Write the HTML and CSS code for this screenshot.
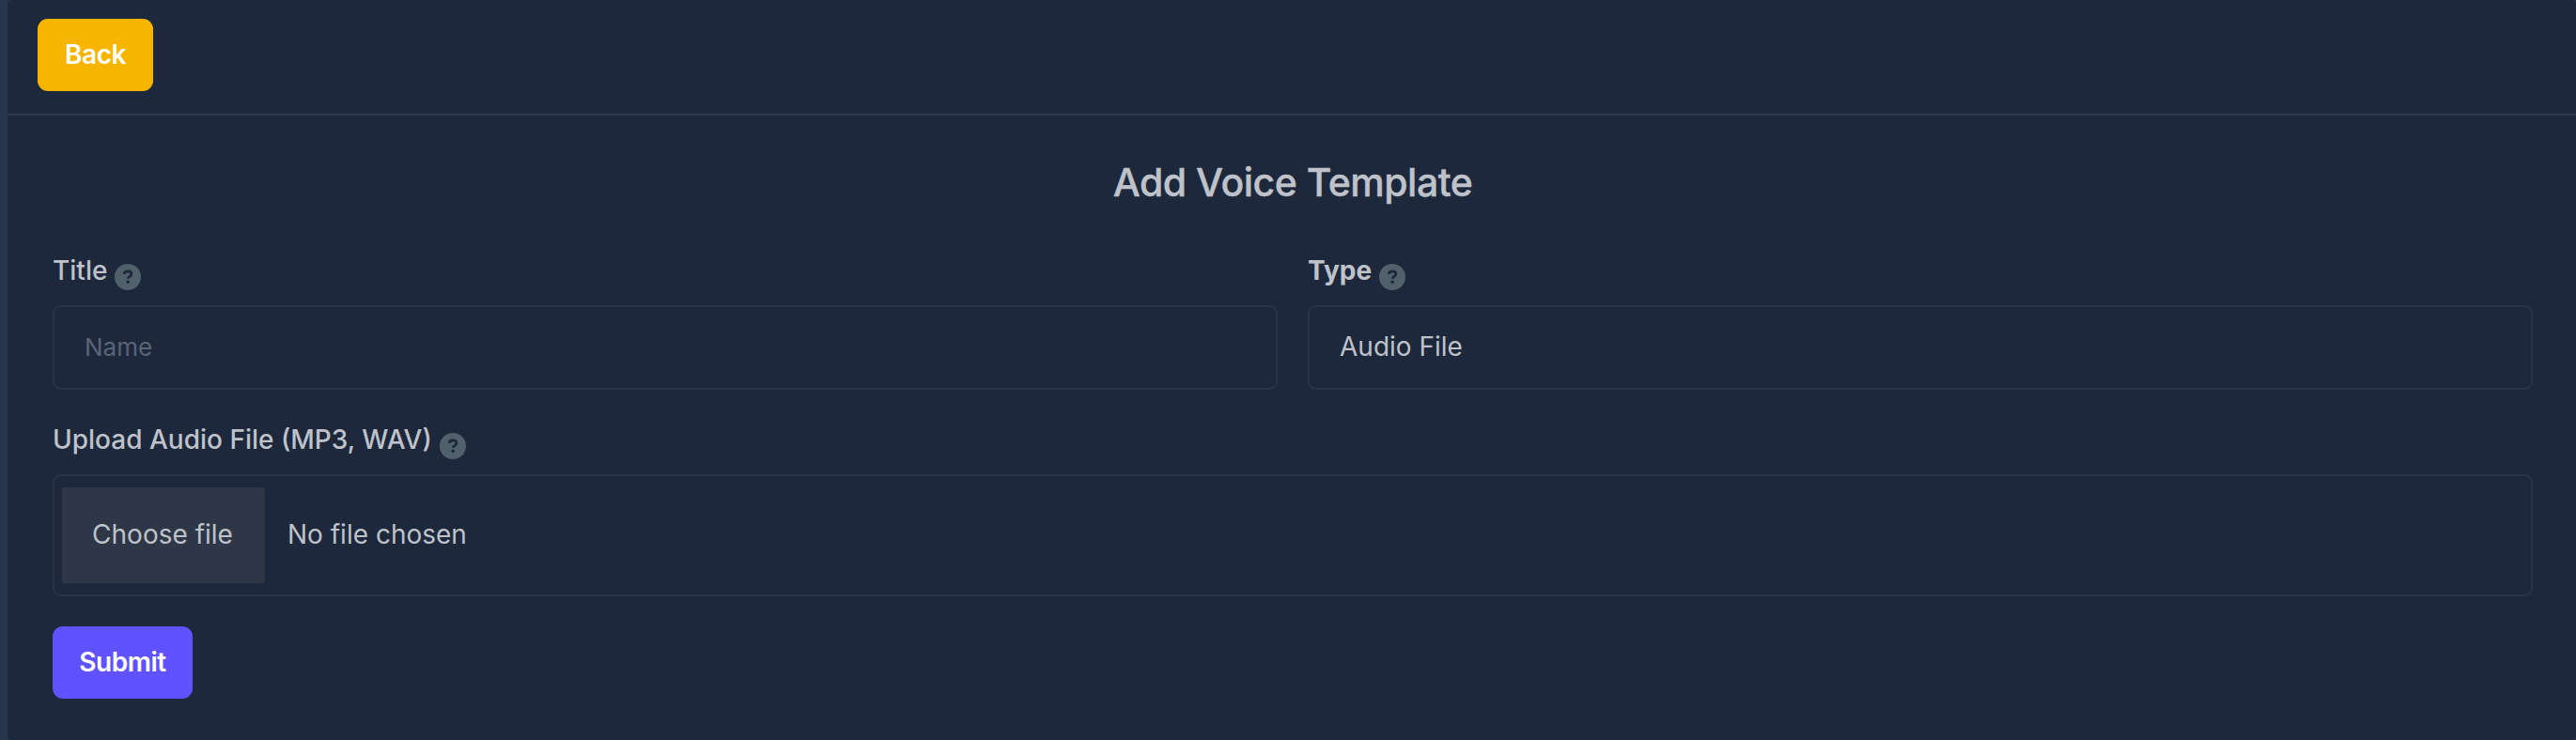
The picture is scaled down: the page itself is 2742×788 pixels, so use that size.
FILE: index.html
```html
<!DOCTYPE html>
<html lang="en">
<head>
    <meta charset="UTF-8">
    <meta name="viewport" content="width=device-width, initial-scale=1.0">
    <title>Add Voice Template</title>
    <link rel="stylesheet" href="styles.css">
</head>
<body>

<div class="card">
    <div class="card-header">
        <button type="button" class="btn btn-warning">Back</button>
    </div>

    <form class="card-body">
        <h2>Add Voice Template</h2>

        <div class="row">
            <div class="field">
                <label for="title">Title
                    <svg class="help" viewBox="0 0 28 28"><circle cx="14" cy="14" r="14"/><path d="M10.2 10.8C10.4 8.8 12 7.8 14 7.8c2.300 0 3.900 1.100 3.900 2.900 0 2.700-3.600 2.500-3.600 5.100"/><circle class="dot" cx="14.200" cy="19.200" r="1.800"/></svg>
                </label>
                <input type="text" id="title" class="form-control" placeholder="Name">
            </div>
            <div class="field">
                <label for="type" class="bold">Type
                    <svg class="help" viewBox="0 0 28 28"><circle cx="14" cy="14" r="14"/><path d="M10.2 10.8C10.4 8.8 12 7.8 14 7.8c2.300 0 3.900 1.100 3.900 2.900 0 2.700-3.600 2.500-3.600 5.100"/><circle class="dot" cx="14.200" cy="19.200" r="1.800"/></svg>
                </label>
                <select id="type" class="form-control">
                    <option>Audio File</option>
                </select>
            </div>
        </div>

        <!-- Audio upload -->
        <div class="field">
            <label>Upload Audio File (MP3, WAV)
                <svg class="help" viewBox="0 0 28 28"><circle cx="14" cy="14" r="14"/><path d="M10.2 10.8C10.4 8.8 12 7.8 14 7.8c2.300 0 3.900 1.100 3.900 2.900 0 2.700-3.600 2.500-3.600 5.100"/><circle class="dot" cx="14.200" cy="19.200" r="1.800"/></svg>
            </label>
            <div class="form-control file-control">
                <button type="button" class="file-button">Choose file</button>
                <span>No file chosen</span>
            </div>
        </div>

        <button type="button" class="btn btn-primary">Submit</button>
    </form>
</div>

</body>
</html>
```

FILE: styles.css
```css
* {
    box-sizing: border-box;
}
body {
    margin: 0;
    padding-left: 8px;
    background-color: #29354c;
    color: #bfc2c9;
    font-family: Inter, sans-serif;
    font-size: 28px;
}
.card {
    height: 788px;
    background-color: #1d283d;
    border-radius: 4px;
}
.card-header {
    height: 123px;
    padding: 20px 32px;
    border-bottom: 2px solid #2f3b4d;
}
.card-body {
    padding: 47px 46px 0 48px;
}
h2 {
    margin: 0 0 48px;
    font-size: 41px;
    line-height: 48px;
    font-weight: 500;
    letter-spacing: -0.5px;
    -webkit-text-stroke: 0.4px #bfc2c9;
    text-align: center;
}
.btn {
    height: 77px;
    padding: 0 0 2px;
    border: none;
    border-radius: 11px;
    color: #fff;
    font-family: inherit;
    font-size: 28px;
    font-weight: 600;
    letter-spacing: -0.5px;
}
.btn-warning {
    width: 123px;
    background-color: #f7b500;
}
.btn-primary {
    width: 149px;
    background-color: #6152ff;
}
.row {
    display: grid;
    grid-template-columns: 1fr 1fr;
    gap: 32px;
}
.field {
    margin-bottom: 32px;
}
label {
    display: flex;
    align-items: flex-start;
    gap: 8px;
    height: 58px;
    padding-top: 4px;
    line-height: 34px;
    font-weight: 500;
}
.row label {
    height: 59px;
    padding-top: 5px;
}
label.bold {
    font-weight: 700;
}
.help {
    width: 28px;
    height: 28px;
    margin-top: 10px;
    fill: #52606b;
}
.help path {
    fill: none;
    stroke: #1d283d;
    stroke-width: 2.8;
}
.help .dot {
    fill: #1d283d;
}
.form-control {
    display: block;
    width: 100%;
    height: 90px;
    padding: 0 32px 2px;
    appearance: none;
    background-color: transparent;
    border: 2px solid #283448;
    border-radius: 9px;
    color: inherit;
    font-family: inherit;
    font-size: 28px;
}
.form-control::placeholder {
    color: #5b6475;
    font-size: 26px;
}
.file-control {
    display: flex;
    align-items: center;
    gap: 24px;
    height: 130px;
    padding: 0 8px;
}
.file-control span {
    padding-bottom: 2px;
}
.file-button {
    width: 216px;
    height: 102px;
    padding: 0 2px 2px 0;
    background-color: #2d3748;
    border: none;
    border-radius: 2px;
    color: inherit;
    font-family: inherit;
    font-size: 28px;
}
```
